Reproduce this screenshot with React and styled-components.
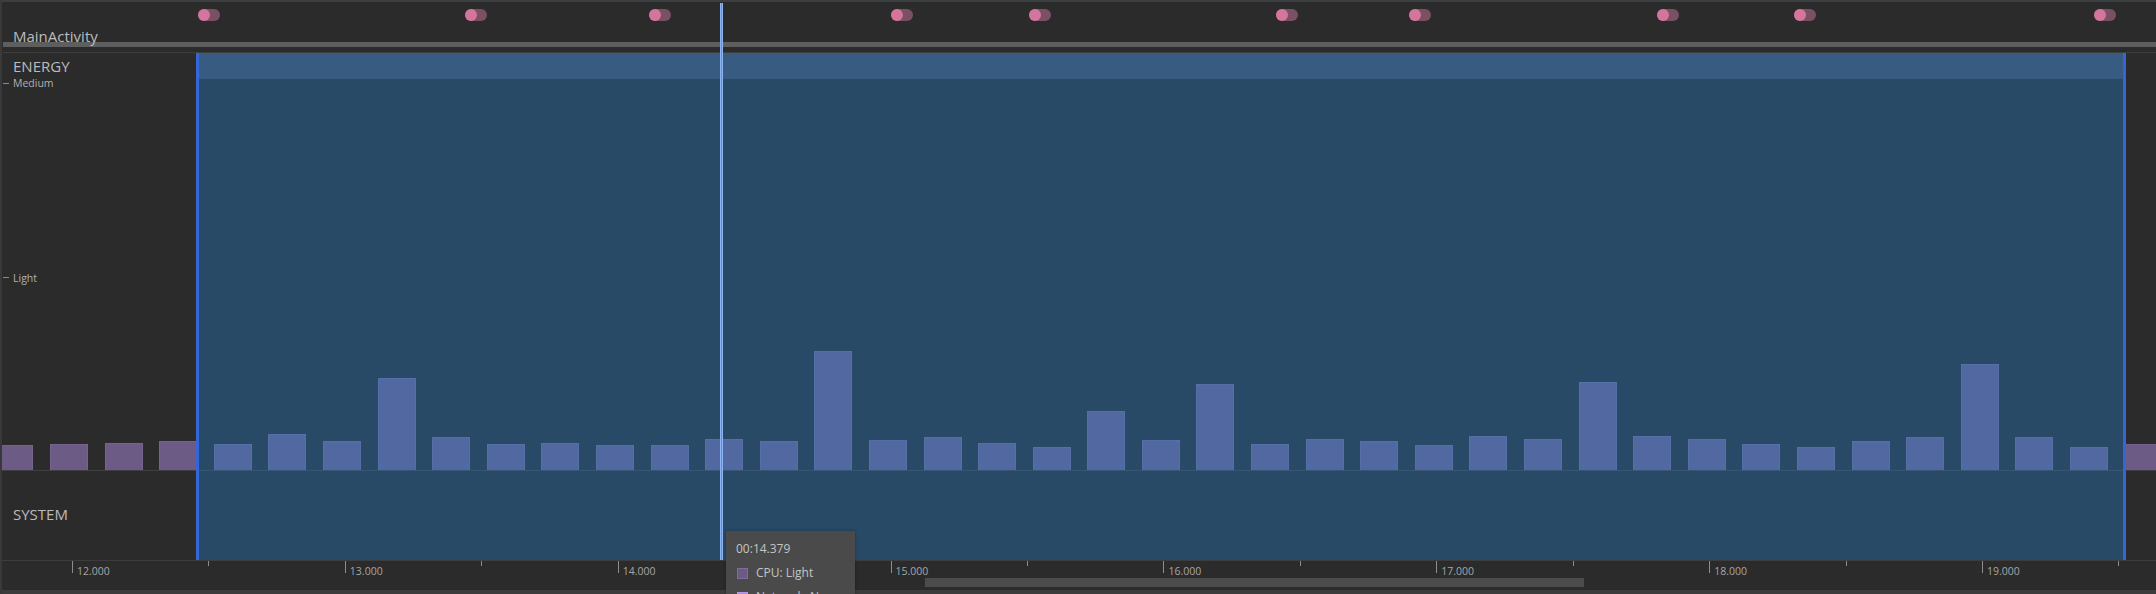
import React from 'react';
import styled, { createGlobalStyle } from 'styled-components';

const GlobalStyle = createGlobalStyle`
  html, body { margin: 0; padding: 0; background: #2b2b2b; }
  body { font-family: "Open Sans", "Noto Sans", sans-serif; }
  *, *::before, *::after { box-sizing: border-box; }
`;

const Root = styled.div`
  position: relative;
  width: 2156px;
  height: 594px;
  overflow: hidden;
  background: #2b2b2b;
  border-top: 2px solid #3c3f41;
  border-left: 2px solid #393939;
  display: flex;
  flex-direction: column;
  font-family: "Open Sans", "Noto Sans", sans-serif;
  color: #bbbbbb;
`;

const EventTrack = styled.div`
  position: relative;
  height: 50px;
  flex: none;
  display: flex;
  flex-direction: column;
  padding-top: 26.7px;
`;

const TrackTitle = styled.div`
  position: relative;
  z-index: 1;
  height: 15px;
  padding-left: 11px;
  font-size: 15px;
  line-height: 15px;
  color: #bbbbbb;
`;

const RangeBar = styled.div`
  margin-top: -1.7px;
  margin-left: 1px;
  height: 5px;
  background: #5e5e5e;
`;

const Pill = styled.div`
  position: absolute;
  top: 7px;
  width: 22px;
  height: 12px;
  border-radius: 6px;
  background: #7c5064;
  &::before {
    content: "";
    position: absolute;
    left: 0;
    top: 0;
    width: 12px;
    height: 12px;
    border-radius: 50%;
    background: #d3759c;
  }
`;

const Divider = styled.div`
  flex: none;
  height: 1px;
  margin-left: 1px;
  background: #3e3e3e;
`;

const Chart = styled.div`
  position: relative;
  flex: none;
  height: 507px;
  display: grid;
  grid-template: 1fr / 1fr;
  & > * { grid-area: 1 / 1; }
`;

const Plot = styled.div`
  align-self: start;
  display: flex;
  align-items: flex-end;
  gap: 16.6px;
  height: 418px;
  margin-left: -6.6px;
  border-bottom: 1px solid #3f3f3f;
`;

const Bar = styled.div`
  flex: none;
  width: 38px;
  background: #6b5b85;
  border: 1px solid #74648f;
  border-bottom: none;
`;

const Labels = styled.div`
  align-self: start;
  display: flex;
  flex-direction: column;
  align-items: flex-start;
  padding-top: 5.7px;
`;

const SectionLabel = styled.div`
  padding-left: 11px;
  font-size: 15px;
  line-height: 15px;
  height: 15px;
  color: #bbbbbb;
  margin-top: ${p => p.$gap || 0}px;
`;

const LevelRow = styled.div`
  display: flex;
  align-items: center;
  gap: 4px;
  height: 12px;
  padding-left: 1px;
  margin-top: ${p => p.$gap}px;
  font-size: 10.5px;
  line-height: 12px;
  color: #b0b0b0;
`;

const LevelTick = styled.span`
  width: 6px;
  height: 1px;
  background: #8a8a8a;
`;

const Selection = styled.div`
  position: absolute;
  left: 194px;
  top: 0;
  width: 1930px;
  height: 507px;
  border-left: 3px solid #3566d6;
  border-right: 3px solid #3566d6;
  background: rgba(34, 131, 211, 0.35);
  background-clip: padding-box;
`;

const SelectionBand = styled.div`
  height: 26px;
  background: rgba(100, 140, 200, 0.28);
`;

const Axis = styled.div`
  position: relative;
  flex: none;
  height: 30px;
  border-top: 1px solid #3d3d3d;
`;

const Tick = styled.div`
  position: absolute;
  top: 0;
  display: flex;
  align-items: flex-start;
`;

const TickLine = styled.span`
  width: 1px;
  height: ${p => (p.$major ? 12 : 5)}px;
  background: #8c8c8c;
`;

const TickLabel = styled.span`
  margin-left: 4px;
  margin-top: 4px;
  font-size: 10.5px;
  line-height: 12px;
  color: #a6a6a6;
  white-space: nowrap;
`;

const ScrollThumb = styled.div`
  position: absolute;
  top: 17px;
  left: 923px;
  width: 659px;
  height: 9px;
  background: #4c4c4c;
`;

const BottomStrip = styled.div`
  flex: none;
  height: 4px;
  background: #3c3c3c;
`;

const Cursor = styled.div`
  position: absolute;
  left: 718px;
  top: 1px;
  width: 3px;
  height: 557px;
  background: linear-gradient(to right, #8cb4f0 0 1px, #5b90e4 1px 2px, #8cb4f0 2px 3px);
  z-index: 5;
`;

const Tooltip = styled.div`
  position: absolute;
  left: 724px;
  top: 529px;
  width: 129px;
  height: 90px;
  background: #4a4a4a;
  padding: 10px 10px 0 10px;
  display: flex;
  flex-direction: column;
  gap: 8px;
  font-size: 12px;
  line-height: 16px;
  color: #c4c4c4;
  z-index: 6;
  box-shadow: 0 0 3px rgba(0, 0, 0, 0.35);
`;

const TooltipRow = styled.div`
  display: flex;
  align-items: center;
  gap: 8px;
  padding-left: 1px;
  white-space: nowrap;
`;

const Swatch = styled.span`
  flex: none;
  width: 11px;
  height: 11px;
  background: ${p => p.$color};
  border: 1px solid ${p => p.$border};
`;

const barHeights = [
  25, 26, 27, 29, 26, 36, 29, 92, 33, 26, 27, 25, 25, 31, 29, 119, 30, 33, 27, 23,
  59, 30, 86, 26, 31, 29, 25, 34, 31, 88, 34, 31, 26, 23, 29, 33, 106, 33, 23, 26,
];

const pills = [198, 465, 649, 891, 1029, 1276, 1409, 1657, 1794, 2094];

const PX_PER_SEC = 272.86;
const ticks = [];
for (let s = 12; s <= 19; s++) {
  ticks.push({ x: 70 + (s - 12) * PX_PER_SEC, major: true, label: `${s}.000` });
  ticks.push({ x: 70 + (s - 12) * PX_PER_SEC + PX_PER_SEC / 2, major: false });
}

export default function App() {
  return (
    <>
      <GlobalStyle />
      <Root>
        <EventTrack>
          {pills.map((x, i) => (
            <Pill key={i} style={{ left: x - 2 }} />
          ))}
          <TrackTitle>MainActivity</TrackTitle>
          <RangeBar />
        </EventTrack>
        <Divider />
        <Chart>
          <Plot>
            {barHeights.map((h, i) => (
              <Bar key={i} style={{ height: h }} />
            ))}
          </Plot>
          <Labels>
            <SectionLabel>ENERGY</SectionLabel>
            <LevelRow $gap={3.5}>
              <LevelTick />
              <span>Medium</span>
            </LevelRow>
            <LevelRow $gap={182.8}>
              <LevelTick />
              <span>Light</span>
            </LevelRow>
            <SectionLabel $gap={222.7}>SYSTEM</SectionLabel>
          </Labels>
          <Selection>
            <SelectionBand />
          </Selection>
        </Chart>
        <Axis>
          {ticks.map((t, i) => (
            <Tick key={i} style={{ left: t.x }}>
              <TickLine $major={t.major} />
              {t.label && <TickLabel>{t.label}</TickLabel>}
            </Tick>
          ))}
          <ScrollThumb />
        </Axis>
        <BottomStrip />
        <Cursor />
        <Tooltip>
          <div>00:14.379</div>
          <TooltipRow>
            <Swatch $color="#6b5a85" $border="#7d6d98" />
            <span>CPU: Light</span>
          </TooltipRow>
          <TooltipRow>
            <Swatch $color="#a88bd8" $border="#b59ce0" />
            <span>Network: None</span>
          </TooltipRow>
        </Tooltip>
      </Root>
    </>
  );
}
